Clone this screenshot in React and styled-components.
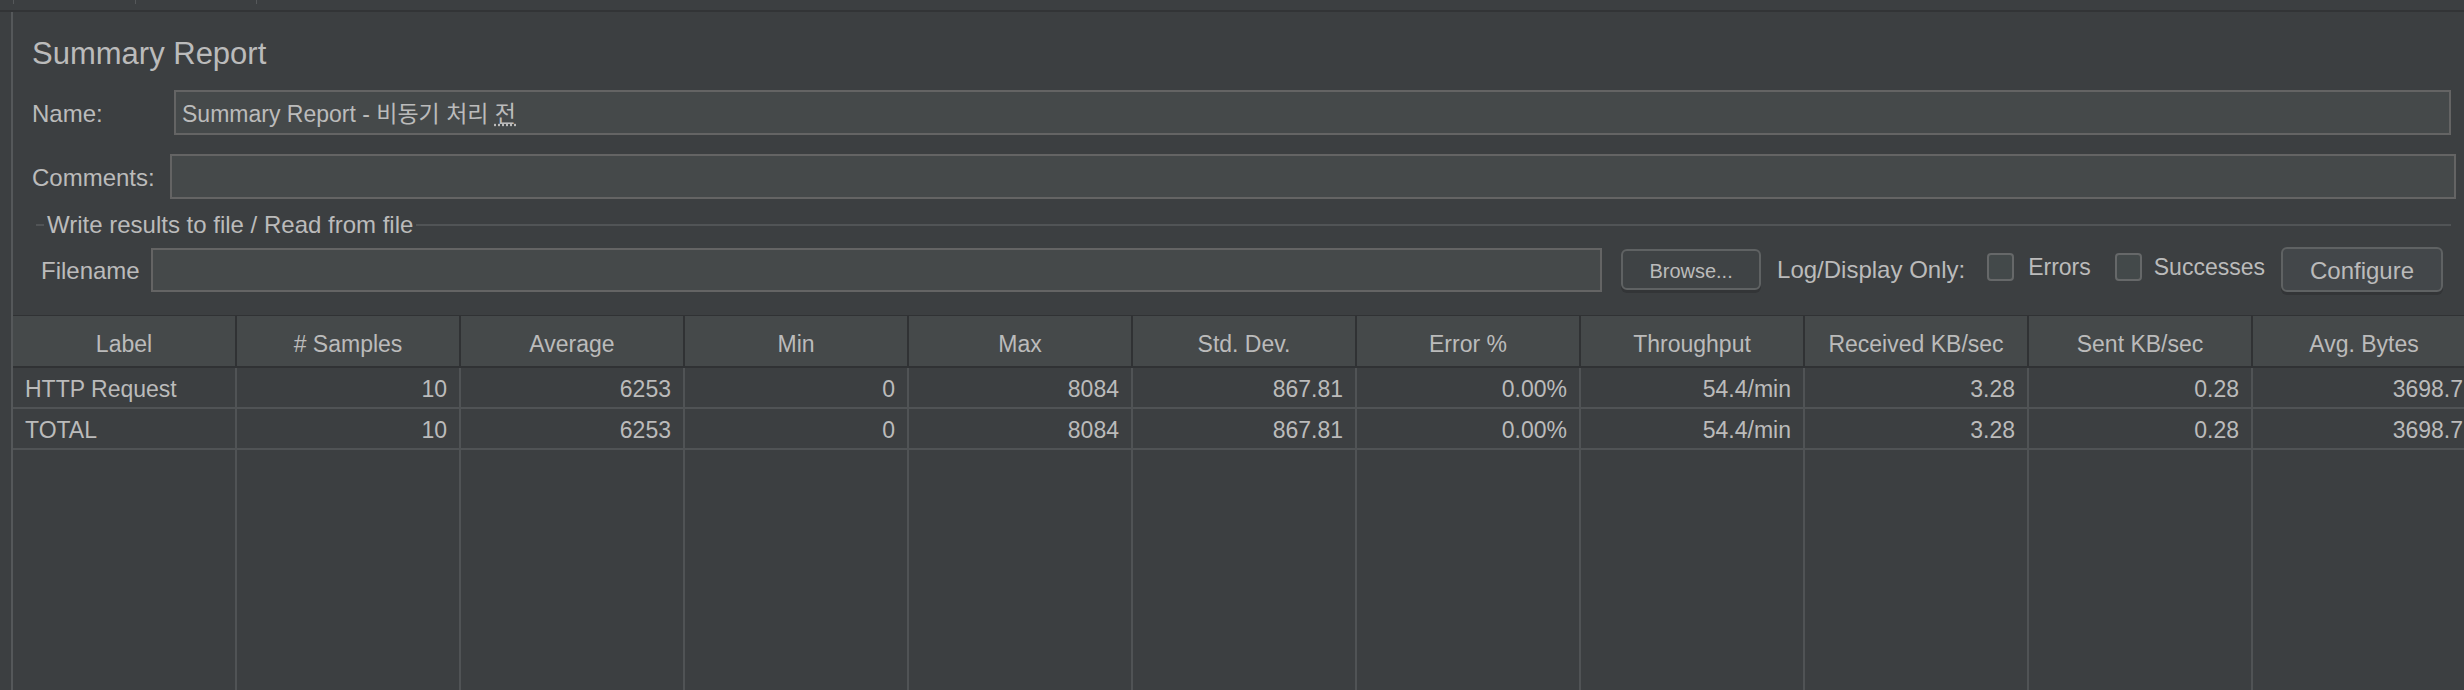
import React from "react";
import styled, { createGlobalStyle } from "styled-components";

const GlobalStyle = createGlobalStyle`
  html, body { margin: 0; padding: 0; background: #3c3f41; }
  body {
    font-family: "Liberation Sans", "Noto Sans CJK KR", Arial, sans-serif;
    color: #bbbbbb;
  }
  * { box-sizing: border-box; }
`;

const Page = styled.div`
  width: 2464px;
  height: 690px;
  overflow: hidden;
  display: flex;
  flex-direction: column;
  background: #3c3f41;
`;

const TabStrip = styled.div`
  height: 12px;
  flex: none;
  display: flex;
  padding-left: 13px;
  border-bottom: 2px solid #323436;
`;

const TabMark = styled.div`
  width: 122px;
  height: 4px;
  border-left: 1px solid #55585a;
  border-right: ${(p) => (p.$last ? "1px solid #55585a" : "none")};
`;

const Main = styled.div`
  flex: 1;
  min-height: 0;
  display: flex;
`;

const LeftRule = styled.div`
  width: 2px;
  margin-left: 11px;
  background: #55585a;
  flex: none;
`;

const Content = styled.div`
  flex: 1;
  min-width: 0;
  display: flex;
  flex-direction: column;
`;

const Title = styled.div`
  margin: 26px 0 0 19px;
  font-size: 31px;
  line-height: 1;
  height: 31px;
`;

const FormRow = styled.div`
  display: flex;
  align-items: center;
  height: 45px;
  margin-top: ${(p) => p.$top}px;
  padding-left: ${(p) => p.$left}px;
  padding-right: ${(p) => p.$right}px;
`;

const Label = styled.div`
  width: ${(p) => p.$width}px;
  flex: none;
  font-size: 24px;
  line-height: 1;
  padding-top: 3px;
`;

const TextField = styled.div`
  flex: 1;
  height: ${(p) => p.$h || 45}px;
  background: #45494a;
  border: 2px solid #646464;
  display: flex;
  align-items: center;
  padding: 3px 6px 0;
  font-size: 23px;
  line-height: 1;
  color: #bbbbbb;
  white-space: nowrap;
  overflow: hidden;
`;

const FieldValue = styled.span`
  white-space: pre;
`;

const Composing = styled.span`
  text-decoration: underline dotted #bbbbbb;
  text-underline-offset: 3px;
`;

const LegendRow = styled.div`
  display: flex;
  align-items: center;
  height: 24px;
  margin-top: 14px;
  padding-left: 23px;
  padding-right: 13px;
`;

const LegendDash = styled.div`
  width: 8px;
  height: 2px;
  background: #515456;
  flex: none;
`;

const LegendText = styled.div`
  font-size: 24px;
  line-height: 1;
  margin: 0 3px;
  white-space: nowrap;
`;

const LegendLine = styled.div`
  flex: 1;
  height: 2px;
  background: #515456;
`;

const Button = styled.div`
  flex: none;
  width: ${(p) => p.$w}px;
  height: ${(p) => p.$h}px;
  margin-left: ${(p) => p.$ml}px;
  border: 2px solid #5f6263;
  border-radius: 6px;
  background: ${(p) => p.$bg};
  box-shadow: 0 3px 0 #333537;
  display: flex;
  align-items: center;
  justify-content: center;
  font-size: ${(p) => p.$fs}px;
  line-height: 1;
  padding-top: 2px;
  color: #bbbbbb;
`;

const InlineText = styled.div`
  flex: none;
  margin-left: ${(p) => p.$ml}px;
  font-size: 24px;
  line-height: 1;
  white-space: nowrap;
`;

const CheckBox = styled.div`
  flex: none;
  width: 27px;
  height: 28px;
  margin-left: ${(p) => p.$ml}px;
  margin-top: -5px;
  border: 2px solid #666869;
  border-radius: 4px;
  background: #43494a;
`;

const CheckLabel = styled.div`
  flex: none;
  margin-left: ${(p) => p.$ml}px;
  margin-top: -5px;
  font-size: 23px;
  line-height: 1;
`;

const Table = styled.div`
  margin-top: 23px;
  width: 2464px;
  flex: 1;
  min-height: 0;
  display: flex;
  flex-direction: column;
`;

const HeaderRow = styled.div`
  display: grid;
  grid-template-columns: repeat(11, 224px);
  height: 53px;
  background: #45494a;
  border-top: 1px solid #303234;
  border-bottom: 2px solid #303234;
  flex: none;
`;

const HeaderCell = styled.div`
  border-right: 2px solid #303234;
  display: flex;
  align-items: center;
  justify-content: center;
  font-size: 23px;
  line-height: 1;
  padding-top: 6px;
  white-space: nowrap;
`;

const Body = styled.div`
  flex: 1;
  display: grid;
  grid-template-columns: repeat(11, 224px);
  grid-template-rows: 41px 41px 1fr;
`;

const Cell = styled.div`
  border-right: 2px solid #505355;
  border-bottom: ${(p) => (p.$filler ? "none" : "2px solid #505355")};
  display: flex;
  align-items: center;
  justify-content: ${(p) => (p.$left ? "flex-start" : "flex-end")};
  padding: 4px 12px 0;
  font-size: 23px;
  line-height: 1;
  white-space: nowrap;
  overflow: hidden;
`;

const columns = [
  "Label",
  "# Samples",
  "Average",
  "Min",
  "Max",
  "Std. Dev.",
  "Error %",
  "Throughput",
  "Received KB/sec",
  "Sent KB/sec",
  "Avg. Bytes",
];

const rows = [
  ["HTTP Request", "10", "6253", "0", "8084", "867.81", "0.00%", "54.4/min", "3.28", "0.28", "3698.7"],
  ["TOTAL", "10", "6253", "0", "8084", "867.81", "0.00%", "54.4/min", "3.28", "0.28", "3698.7"],
];

export default function App() {
  return (
    <>
      <GlobalStyle />
      <Page>
        <TabStrip>
          <TabMark />
          <TabMark $last />
        </TabStrip>
        <Main>
          <LeftRule />
          <Content>
            <Title>Summary Report</Title>
            <FormRow $top={21} $left={19} $right={13}>
              <Label $width={142}>Name:</Label>
              <TextField>
                <FieldValue>
                  {"Summary Report - 비동기 처리 "}
                  <Composing>전</Composing>
                </FieldValue>
              </TextField>
            </FormRow>
            <FormRow $top={19} $left={19} $right={8}>
              <Label $width={138}>Comments:</Label>
              <TextField />
            </FormRow>
            <LegendRow>
              <LegendDash />
              <LegendText>Write results to file / Read from file</LegendText>
              <LegendLine />
            </LegendRow>
            <FormRow $top={10} $left={28} $right={21}>
              <Label $width={110}>Filename</Label>
              <TextField $h={44} />
              <Button $w={140} $h={41} $ml={19} $fs={20} $bg="#3f4345">
                Browse...
              </Button>
              <InlineText $ml={16}>Log/Display Only:</InlineText>
              <CheckBox $ml={22} />
              <CheckLabel $ml={14}>Errors</CheckLabel>
              <CheckBox $ml={24} />
              <CheckLabel $ml={12}>Successes</CheckLabel>
              <Button $w={162} $h={45} $ml={16} $fs={24} $bg="#43474a">
                Configure
              </Button>
            </FormRow>
            <Table>
              <HeaderRow>
                {columns.map((c) => (
                  <HeaderCell key={c}>{c}</HeaderCell>
                ))}
              </HeaderRow>
              <Body>
                {rows.map((r, ri) =>
                  r.map((v, ci) => (
                    <Cell key={`${ri}-${ci}`} $left={ci === 0}>
                      {v}
                    </Cell>
                  ))
                )}
                {columns.map((c) => (
                  <Cell key={`f-${c}`} $filler />
                ))}
              </Body>
            </Table>
          </Content>
        </Main>
      </Page>
    </>
  );
}
